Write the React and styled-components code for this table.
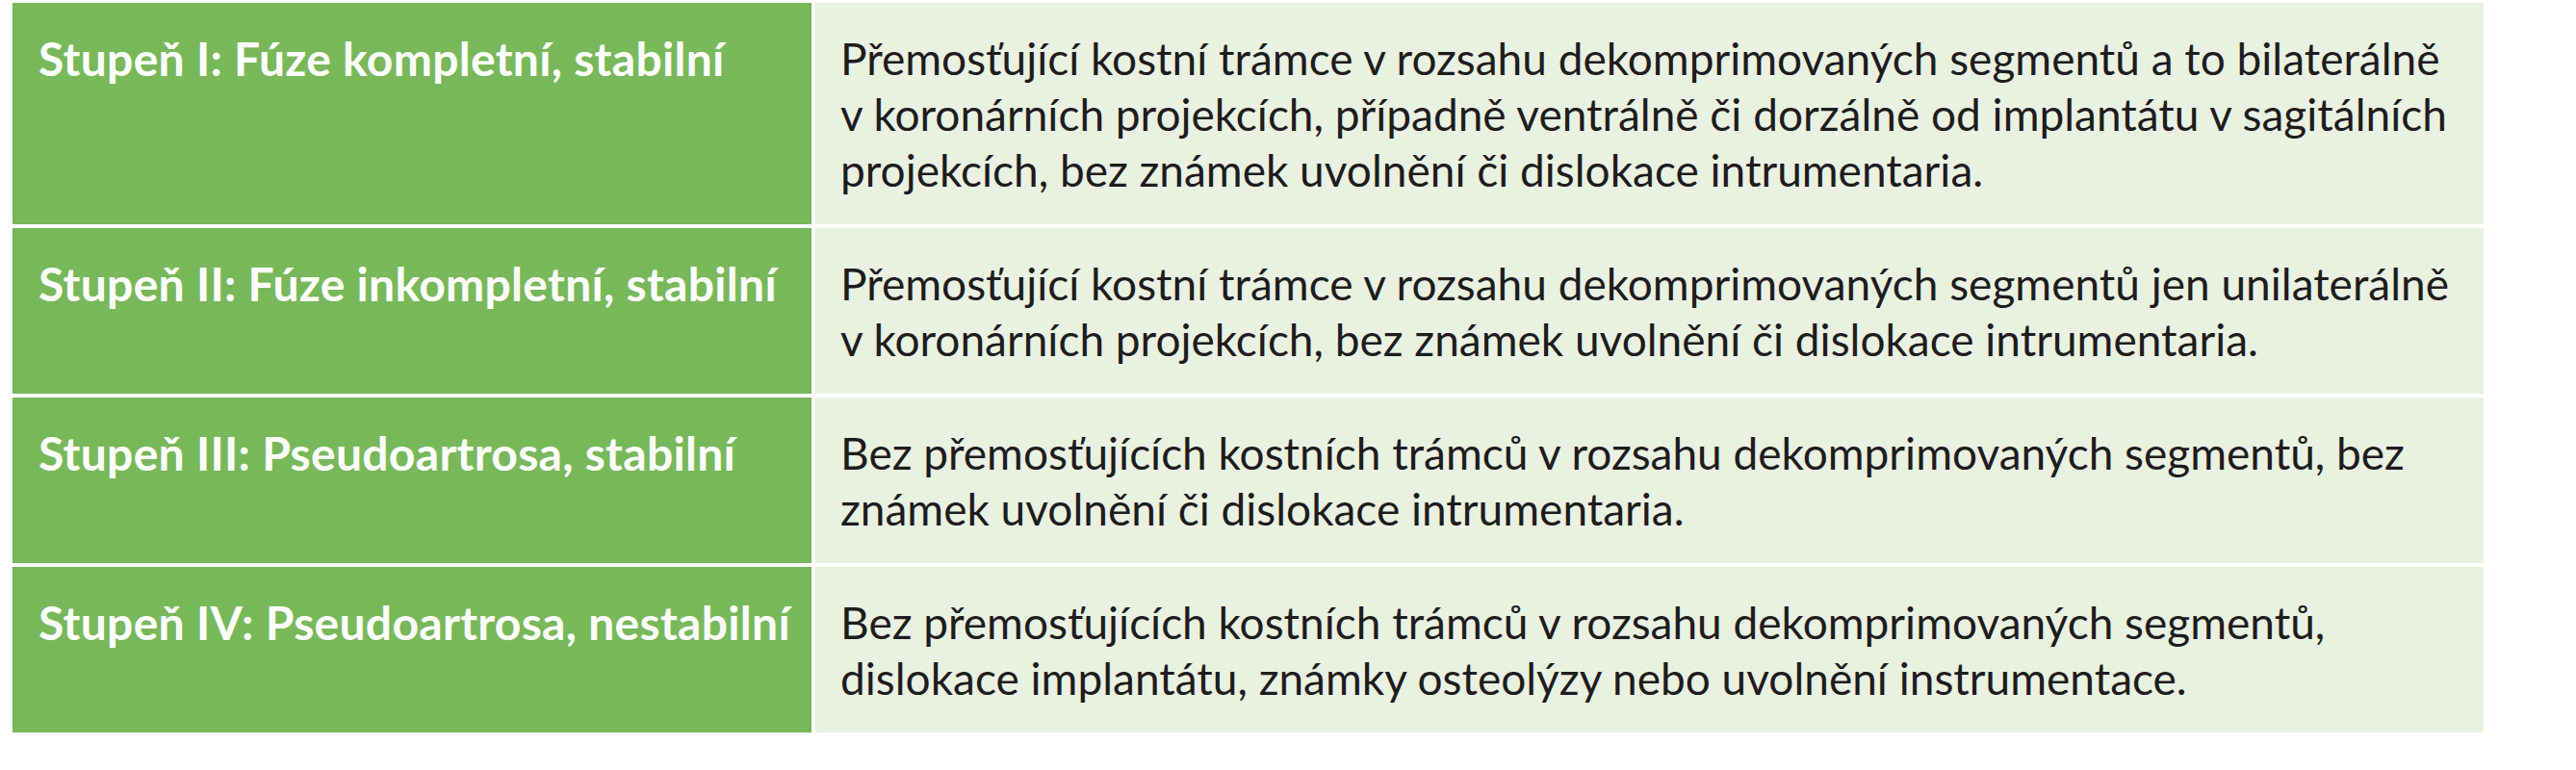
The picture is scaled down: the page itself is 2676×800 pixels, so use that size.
import React from "react";
import styled, { createGlobalStyle } from "styled-components";

const Global = createGlobalStyle`
  html, body {
    margin: 0;
    padding: 0;
    background: #fff;
  }
`;

const Page = styled.div`
  padding: 3px 0 0 13px;
  width: 2676px;
  height: 800px;
  box-sizing: border-box;
`;

const Table = styled.div`
  display: grid;
  grid-template-columns: 830px 1733px;
  column-gap: 4px;
  row-gap: 4px;
`;

const Head = styled.div`
  background: #78b85b;
  color: #fff;
  font-family: Lato, "Open Sans", sans-serif;
  font-weight: 700;
  font-size: 48px;
  line-height: 58px;
  letter-spacing: 0.3px;
  padding: 29px 0 27px 27px;
  white-space: nowrap;
  overflow: hidden;
`;

const Desc = styled.div`
  background: #e9f1e1;
  color: #1e1c1c;
  font-family: Lato, "Open Sans", sans-serif;
  font-size: 46px;
  line-height: 58px;
  padding: 29px 26px 27px;
  white-space: nowrap;
`;

const Line = styled.span`
  display: block;
`;

const rows = [
  {
    head: "Stupeň I: Fúze kompletní, stabilní",
    lines: [
      "Přemosťující kostní trámce v rozsahu dekomprimovaných segmentů a to bilaterálně",
      "v koronárních projekcích, případně ventrálně či dorzálně od implantátu v sagitálních",
      "projekcích, bez známek uvolnění či dislokace intrumentaria.",
    ],
  },
  {
    head: "Stupeň II: Fúze inkompletní, stabilní",
    lines: [
      "Přemosťující kostní trámce v rozsahu dekomprimovaných segmentů jen unilaterálně",
      "v koronárních projekcích, bez známek uvolnění či dislokace intrumentaria.",
    ],
  },
  {
    head: "Stupeň III: Pseudoartrosa, stabilní",
    lines: [
      "Bez přemosťujících kostních trámců v rozsahu dekomprimovaných segmentů, bez",
      "známek uvolnění či dislokace intrumentaria.",
    ],
  },
  {
    head: "Stupeň IV: Pseudoartrosa, nestabilní",
    lines: [
      "Bez přemosťujících kostních trámců v rozsahu dekomprimovaných segmentů,",
      "dislokace implantátu, známky osteolýzy nebo uvolnění instrumentace.",
    ],
  },
];

export default function App() {
  return (
    <Page>
      <Global />
      <Table>
        {rows.map((r) => (
          <React.Fragment key={r.head}>
            <Head>{r.head}</Head>
            <Desc>
              {r.lines.map((l) => (
                <Line key={l}>{l}</Line>
              ))}
            </Desc>
          </React.Fragment>
        ))}
      </Table>
    </Page>
  );
}
